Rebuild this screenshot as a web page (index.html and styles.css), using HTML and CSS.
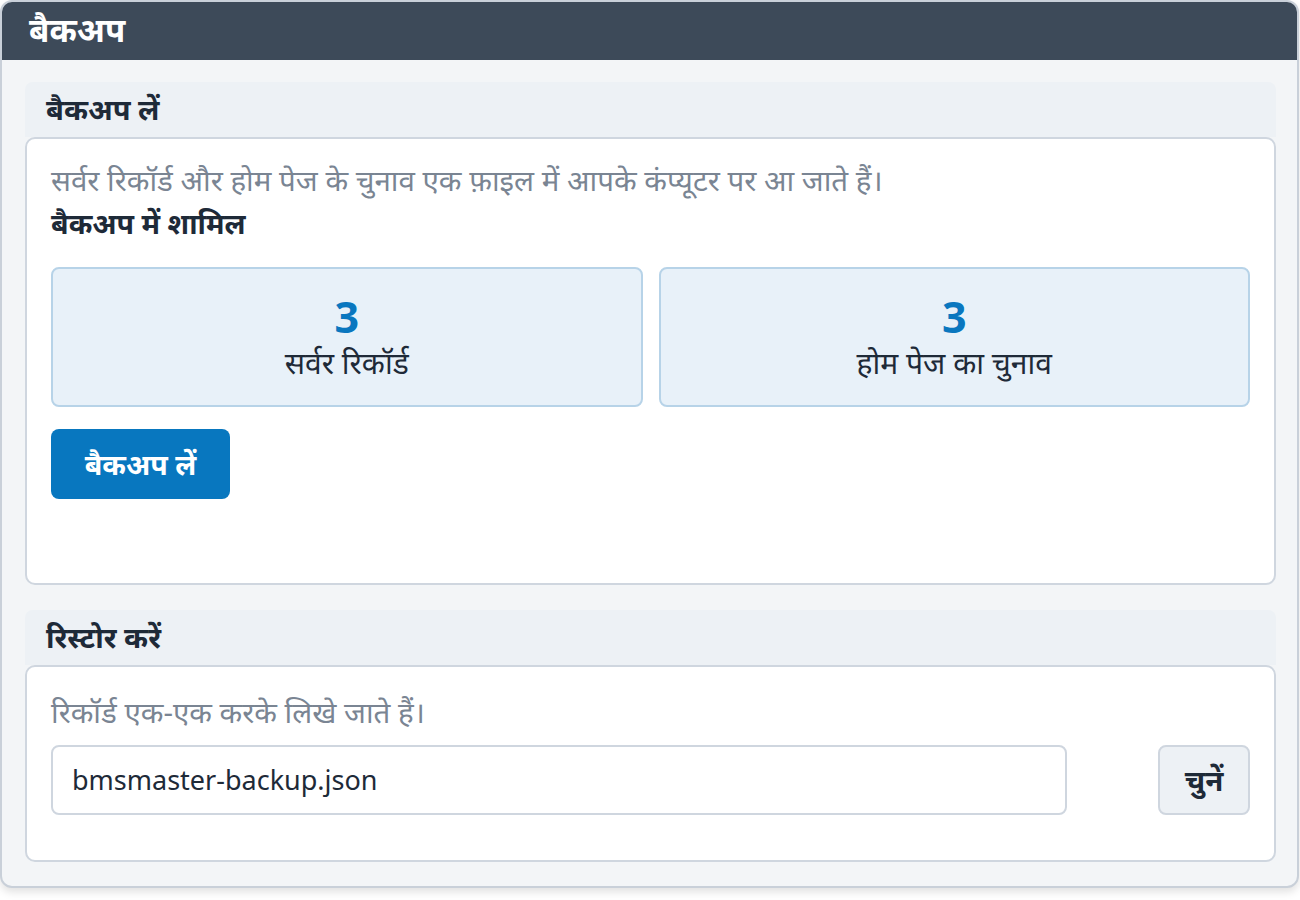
FILE: index.html
```html
<!DOCTYPE html>
<html lang="hi">
<head>
<meta charset="utf-8">
<title>बैकअप</title>
<link rel="stylesheet" href="styles.css">
</head>
<body>
<div class="panel">
  <div class="panel-head">बैकअप</div>
  <div class="panel-body">
    <section class="section">
      <div class="section-head">बैकअप लें</div>
      <div class="card card-backup">
        <p class="muted">सर्वर रिकॉर्ड और होम पेज के चुनाव एक फ़ाइल में आपके कंप्यूटर पर आ जाते हैं।</p>
        <p class="strong">बैकअप में शामिल</p>
        <div class="stats">
          <div class="stat"><div class="stat-num">3</div><div class="stat-label">सर्वर रिकॉर्ड</div></div>
          <div class="stat"><div class="stat-num">3</div><div class="stat-label">होम पेज का चुनाव</div></div>
        </div>
        <button class="btn-primary">बैकअप लें</button>
      </div>
    </section>
    <section class="section">
      <div class="section-head">रिस्टोर करें</div>
      <div class="card card-restore">
        <p class="muted">रिकॉर्ड एक-एक करके लिखे जाते हैं।</p>
        <div class="file-row">
          <div class="file-input">bmsmaster-backup.json</div>
          <button class="btn-light">चुनें</button>
        </div>
      </div>
    </section>
  </div>
</div>
</body>
</html>
```

FILE: styles.css
```css
* { box-sizing: border-box; }
html, body { margin: 0; padding: 0; background: #ffffff; }
body {
  font-family: "Noto Sans", "Open Sans", sans-serif;
  color: #1e2a38;
  width: 1300px;
  height: 900px;
  overflow: hidden;
}
.panel {
  width: 1299px;
  border: 2px solid #c9d0d9;
  border-radius: 12px;
  background: #f3f5f7;
  overflow: hidden;
  box-shadow: 0 4px 8px rgba(0,0,0,0.12);
}
.panel-head {
  background: #3d4a59;
  color: #ffffff;
  height: 58px;
  padding: 0 0 0 27px;
  font-size: 33px;
  font-weight: 700;
  line-height: 56px;
}
.panel-body {
  padding: 22px 21px 24px 23px;
  display: flex;
  flex-direction: column;
  gap: 25px;
}
.section-head {
  background: #edf1f5;
  border-radius: 8px 8px 0 0;
  height: 55px;
  padding: 0 21px;
  font-size: 29px;
  font-weight: 700;
  line-height: 54px;
  color: #1e2a38;
}
.card {
  background: #ffffff;
  border: 2px solid #cfd6df;
  border-radius: 10px;
  padding: 24px 24px 24px 24px;
}
.card-backup { height: 448px; }
.card-restore { height: 197px; padding-top: 28px; }
.muted {
  margin: 0;
  color: #7a8593;
  font-size: 29.5px;
  line-height: 34px;
}
.strong {
  margin: 9px 0 0 0;
  font-size: 28.5px;
  font-weight: 700;
  line-height: 34px;
  color: #1e2a38;
}
.stats {
  margin-top: 27px;
  display: grid;
  grid-template-columns: 1fr 1fr;
  gap: 16px;
}
.stat {
  height: 140px;
  background: #e8f1f9;
  border: 2px solid #b7d3e8;
  border-radius: 8px;
  display: flex;
  flex-direction: column;
  align-items: center;
  justify-content: center;
}
.stat-num {
  color: #0a77bf;
  font-size: 43px;
  font-weight: 700;
  line-height: 52px;
}
.stat-label {
  font-size: 30px;
  line-height: 40px;
  color: #1e2a38;
}
.btn-primary {
  margin-top: 22px;
  width: 179px;
  height: 70px;
  background: #0877bf;
  color: #ffffff;
  border: none;
  border-radius: 8px;
  font-family: inherit;
  font-size: 28.5px;
  font-weight: 700;
  line-height: 1;
  padding: 0;
  cursor: pointer;
}
.file-row {
  margin-top: 16px;
  display: flex;
  justify-content: space-between;
  align-items: center;
}
.file-input {
  width: 1016px;
  height: 70px;
  border: 2px solid #cfd6df;
  border-radius: 8px;
  padding: 0 19px;
  font-size: 27px;
  line-height: 66px;
  color: #1e2a38;
}
.btn-light {
  width: 92px;
  height: 70px;
  background: #edf1f5;
  border: 2px solid #cfd6df;
  border-radius: 8px;
  font-family: inherit;
  font-size: 29.5px;
  font-weight: 700;
  line-height: 1;
  padding: 0;
  color: #1e2a38;
  cursor: pointer;
}
```
